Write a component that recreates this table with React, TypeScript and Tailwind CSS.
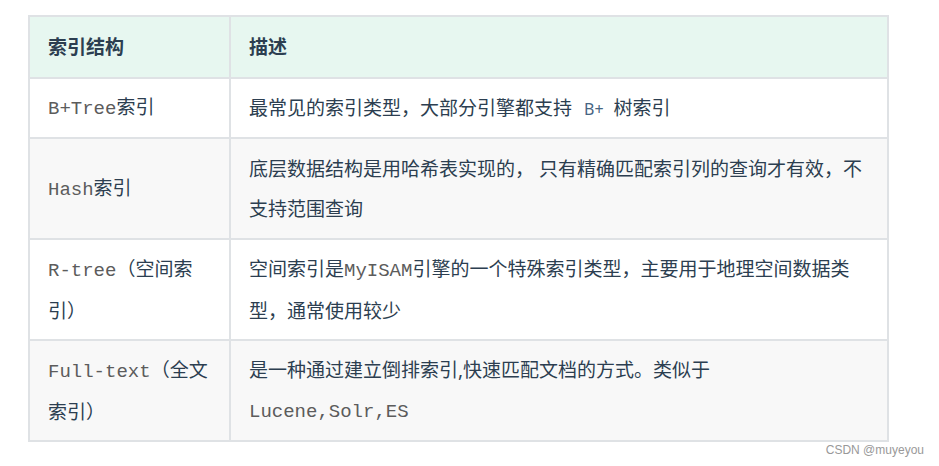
// Index-structure comparison table (MySQL index types), CSDN article style.

const CJK = "font-['Noto_Sans','Noto_Sans_CJK_SC',sans-serif]";
const MONO = "font-['Liberation_Mono','Noto_Sans_CJK_SC',monospace] text-[#5c5c5c]";

function Mono({ children }: { children: React.ReactNode }) {
  return <span className={MONO}>{children}</span>;
}

interface Row {
  name: React.ReactNode;
  desc: React.ReactNode;
  shaded?: boolean;
}

const ROWS: Row[] = [
  {
    name: (
      <>
        <Mono>B+Tree</Mono>索引
      </>
    ),
    desc: (
      <>
        最常见的索引类型，大部分引擎都支持
        <span className="ml-[12px] mr-[10px] text-[16px] text-[#476582]">B+</span>
        树索引
      </>
    ),
  },
  {
    name: (
      <>
        <Mono>Hash</Mono>索引
      </>
    ),
    desc: (
      <>
        底层数据结构是用哈希表实现的， 只有精确匹配索引列的查询才有效，不
        <br />
        支持范围查询
      </>
    ),
    shaded: true,
  },
  {
    name: (
      <>
        <Mono>R-tree</Mono>（空间索
        <br />
        引）
      </>
    ),
    desc: (
      <>
        空间索引是<Mono>MyISAM</Mono>引擎的一个特殊索引类型，主要用于地理空间数据类
        <br />
        型，通常使用较少
      </>
    ),
  },
  {
    name: (
      <>
        <Mono>Full-text</Mono>（全文
        <br />
        索引）
      </>
    ),
    desc: (
      <>
        是一种通过建立倒排索引,快速匹配文档的方式。类似于
        <br />
        <Mono>Lucene,Solr,ES</Mono>
      </>
    ),
    shaded: true,
  },
];

export default function App() {
  return (
    <div className={`w-[939px] h-[466px] bg-white ${CJK} text-[19px] leading-[40px] text-[#2c3e50]`}>
      <div className="pl-[28px] pt-[15px]">
        <div className="grid w-[861px] grid-cols-[199px_656px] grid-rows-[60px_58px_99px_99px_99px] gap-[2px] p-[2px] bg-[#dfe2e5]">
          <div className="flex items-center px-[18px] bg-[#e7f7f0] font-bold">索引结构</div>
          <div className="flex items-center px-[18px] bg-[#e7f7f0] font-bold">描述</div>
          {ROWS.map((r, i) => (
            <div key={i} className="contents">
              <div className={`flex items-center px-[18px] ${r.shaded ? 'bg-[#f8f8f8]' : 'bg-white'}`}>
                <div>{r.name}</div>
              </div>
              <div className={`flex items-center px-[18px] ${r.shaded ? 'bg-[#f8f8f8]' : 'bg-white'}`}>
                <div className="whitespace-nowrap">{r.desc}</div>
              </div>
            </div>
          ))}
        </div>
      </div>
      <div className="pr-[15px] text-right font-['Liberation_Sans',sans-serif] text-[12px] leading-[16px] text-[#999]">
        CSDN @muyeyou
      </div>
    </div>
  );
}
